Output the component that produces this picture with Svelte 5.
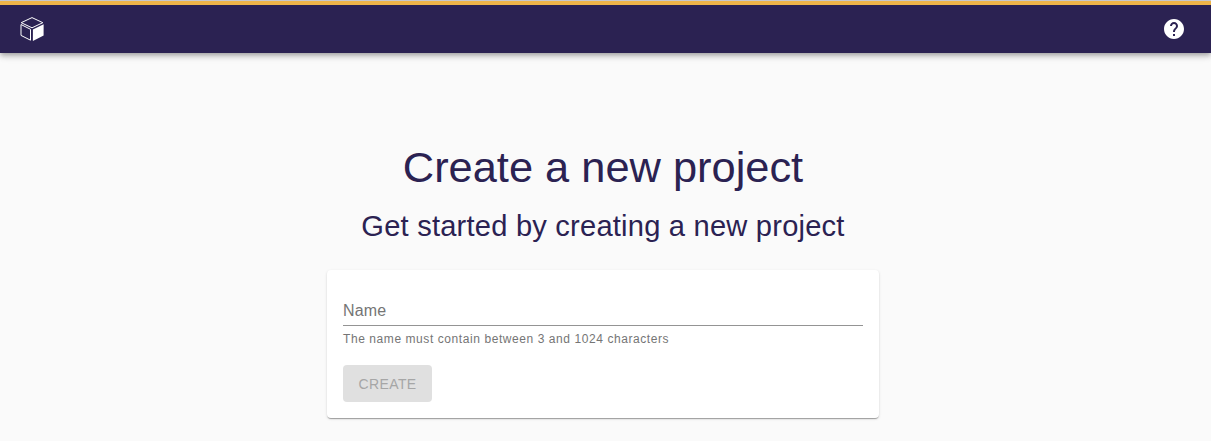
<script>
  let name = $state('');
</script>

<div class="page">
  <header>
    <svg class="logo" viewBox="0 0 24 24" aria-label="Home">
      <path d="M12 .6 22.8 5.7 12 10.8 1.2 5.7Z" />
      <path d="M1 7.5 10.5 12.3V23.2L1 18.4Z" />
      <path class="solid" d="M12.9 12.5 23.6 7.2V18.4L12.9 23.9Z" />
    </svg>
    <svg class="help" viewBox="0 0 24 24" aria-label="Help">
      <path d="M12 2C6.48 2 2 6.48 2 12s4.48 10 10 10 10-4.48 10-10S17.52 2 12 2zm1 17h-2v-2h2v2zm2.07-7.75-.9.92C13.45 12.9 13 13.5 13 15h-2v-.5c0-1.1.45-2.1 1.17-2.83l1.24-1.26c.37-.36.59-.86.59-1.41 0-1.1-.9-2-2-2s-2 .9-2 2H8c0-2.21 1.79-4 4-4s4 1.79 4 4c0 .88-.36 1.68-.93 2.25z" />
    </svg>
  </header>
  <main>
    <h1>Create a new project</h1>
    <h2>Get started by creating a new project</h2>
    <form onsubmit={(e) => e.preventDefault()}>
      <input bind:value={name} placeholder="Name" />
      <p>The name must contain between 3 and 1024 characters</p>
      <button disabled={name.length < 3 || name.length > 1024}>CREATE</button>
    </form>
  </main>
</div>

<style>
  :global(body) { background: #fafafa; }
  .page {
    min-height: 441px;
    box-sizing: border-box;
    border-top: 1px solid #c8c8cc;
    font-family: "Liberation Sans", Arial, sans-serif;
    color: #2b2252;
    overflow: hidden;
  }
  header {
    height: 52px;
    box-sizing: border-box;
    border-top: 4px solid #efb549;
    background: #2b2252;
    display: flex;
    align-items: center;
    justify-content: space-between;
    padding: 0 25px 0 20px;
    box-shadow: 0 2px 4px -1px rgba(0,0,0,.2), 0 4px 5px rgba(0,0,0,.14), 0 1px 10px rgba(0,0,0,.12);
  }
  svg { width: 24px; height: 24px; }
  .logo { fill: none; stroke: #fff; stroke-width: 1; stroke-linejoin: round; }
  .logo .solid { fill: #fff; stroke: none; }
  .help { fill: #fff; }
  main {
    width: 552px;
    margin: 0 auto;
    padding: 88px 5px 0 0;
    display: flex;
    flex-direction: column;
    align-items: center;
  }
  h1, h2 { margin: 0; font-weight: 400; white-space: nowrap; }
  h1 { font-size: 43.4px; line-height: 52px; }
  h2 { font-size: 29.1px; line-height: 36px; letter-spacing: .00735em; margin-top: 15px; }
  form {
    width: 552px;
    height: 148px;
    box-sizing: border-box;
    margin-top: 26px;
    padding: 24px 16px 16px;
    background: #fff;
    border-radius: 4px;
    box-shadow: 0 2px 1px -1px rgba(0,0,0,.2), 0 1px 1px rgba(0,0,0,.14), 0 1px 3px rgba(0,0,0,.12);
  }
  input {
    display: block;
    width: 100%;
    height: 32px;
    box-sizing: border-box;
    border: 0;
    border-bottom: 1px solid #949494;
    outline: 0;
    padding: 3px 0 0;
    background: none;
    font: 16px "Liberation Sans", Arial, sans-serif;
    letter-spacing: .00938em;
  }
  input::placeholder { color: #757575; opacity: 1; }
  p { margin: 3px 0 0; font-size: 12px; line-height: 20px; letter-spacing: .575px; color: #757575; }
  button {
    display: block;
    width: 89px;
    height: 37px;
    margin-top: 16px;
    padding: 1px 0 0;
    border: 0;
    border-radius: 4px;
    background: #e0e0e0;
    color: #a6a6a6;
    font: 14px "Liberation Sans", Arial, sans-serif;
    letter-spacing: .02857em;
  }
</style>
